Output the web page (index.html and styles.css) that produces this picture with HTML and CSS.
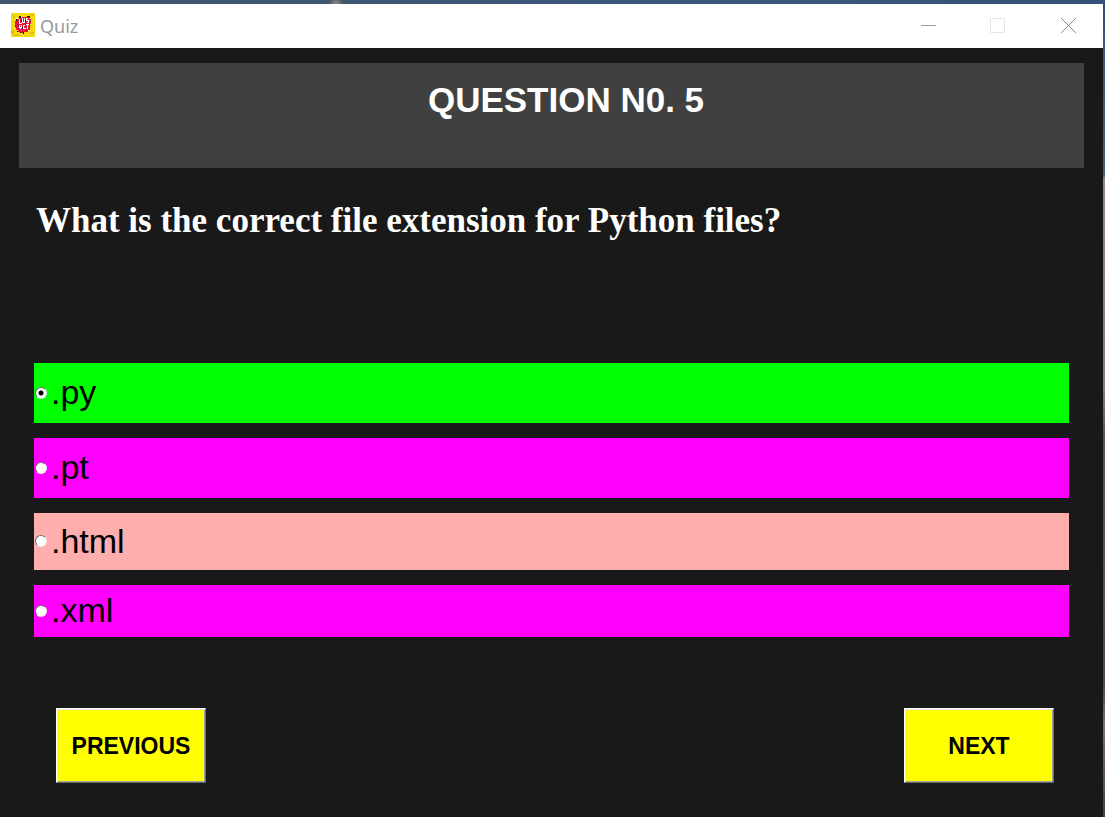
FILE: index.html
```html
<!DOCTYPE html>
<html lang="en">
<head>
<meta charset="utf-8">
<title>Quiz</title>
<link rel="stylesheet" href="styles.css">
</head>
<body>
<div class="window">
  <header class="titlebar">
    <svg class="app-icon" viewBox="0 0 24 24" aria-hidden="true" shape-rendering="crispEdges">
      <path fill="#f5d90f" d="M0 0h24v24H0z"/>
      <path fill="#e8bc12" d="M0 17h3v4H0zM20 1h3v2h-3zM2 2h2v3H2zM19 19h4v2h-4zM3 21h5v2H3z"/>
      <path fill="#fff7c0" d="M5 5h2v2H5zM17 16h2v2h-2zM7 18h2v1H7z"/>
      <path fill="#111" d="M8 3h2v2H8zM16 3h3v2h-3zM5 6h1v2H5zM19 6h1v3h-1zM4 12h2v2H4zM18 14h1v2h-1zM6 18h1v1H6zM9 19h2v1H9zM12 19h1v2h-1z"/>
      <path fill="#e3173e" d="M6 6h2V5h3V4h7v2h2v5h-1v6h-2v2h-5v1h-2v-1H7v-2H5v-4H4V8h2z"/>
      <path fill="#fff" d="M8 6h1v4h2v1H8zM11 5h1v4h1V5h1v5h-3zM15 5h2v1h-1v1h2v3h-2V9h1V8h-2zM8 12h1v2h1v-2h1v3h-1v1H9v-1H8zM12 12h2v1h-1v2h2v1h-3zM15 11h3v1h-1v4h-1v-4h-1z"/>
      <path fill="#111" d="M10 7h1v2h-1zM14 7h1v2h-1zM11 14h1v2h-1zM7 12h1v1H7z"/>
    </svg>
    <span class="caption">Quiz</span>
    <div class="controls">
      <button class="control" type="button" aria-label="Minimize"><svg viewBox="0 0 16 16" aria-hidden="true"><path d="M1 7.5h15" stroke="#999"/></svg></button>
      <button class="control" type="button" aria-label="Maximize" disabled><svg viewBox="0 0 16 16" aria-hidden="true"><path d="M.5.5h14v14H.5z" stroke="#e6e6e6"/></svg></button>
      <button class="control" type="button" aria-label="Close"><svg viewBox="0 0 16 16" aria-hidden="true"><path d="M1 0l15 15M16 0L1 15" stroke="#888"/></svg></button>
    </div>
  </header>
  <main class="quiz">
    <h1 class="heading">QUESTION N0. 5</h1>
    <form class="form">
      <fieldset class="question">
        <legend class="prompt">What is the correct file extension for Python files?</legend>
        <div class="options">
          <label class="option correct"><input class="radio" type="radio" name="answer" checked><span>.py</span></label>
          <label class="option"><input class="radio" type="radio" name="answer"><span>.pt</span></label>
          <label class="option medium active"><input class="radio" type="radio" name="answer"><span>.html</span></label>
          <label class="option short"><input class="radio" type="radio" name="answer"><span>.xml</span></label>
        </div>
      </fieldset>
      <div class="actions">
        <button class="nav" type="button">PREVIOUS</button>
        <button class="nav" type="button">NEXT</button>
      </div>
    </form>
  </main>
</div>
</body>
</html>
```
FILE: styles.css
```css
* { box-sizing: border-box; }

body {
  margin: 0;
  min-height: 100vh;
  padding: 4px 2px 0 0;
  display: flex;
  background:
    radial-gradient(circle at 336px 4px, #8d8a8c 0, #4d5663 7px, transparent 10px) 0 0 / 100% 4px no-repeat,
    linear-gradient(90deg, #42566f, #3b587c 60%, #345179) 0 0 / 100% 4px no-repeat,
    linear-gradient(#345179 0, #4a607d 176px, #93847f 178px, #8a7a74 390px, #604f49 440px, #5a4a48 690px, #806e6a 725px, #4b4040 817px);
  font-family: "Liberation Sans", Arial, sans-serif;
}

.window {
  flex: 1;
  display: flex;
  flex-direction: column;
  background: #191919;
  border-bottom: 1px solid #0c0c0c;
}

.titlebar {
  display: flex;
  align-items: center;
  height: 44px;
  padding: 0 0 2px 11px;
  gap: 5px;
  background: #fff;
}

.app-icon { width: 24px; height: 24px; }

.caption {
  padding-top: 2px;
  color: #999;
  font: 18px/24px "Noto Sans", "Open Sans", sans-serif;
}

.controls { display: flex; margin-left: auto; }

.control {
  width: 70px;
  height: 42px;
  padding: 2px 0 0;
  border: 0;
  background: none;
  display: grid;
  place-items: center;
}

.control svg { width: 16px; height: 16px; fill: none; }

.quiz { padding: 15px 19px 34px; }

.heading {
  margin: 0;
  height: 105px;
  padding: 17px 0 0 29px;
  background: #404040;
  color: #fff;
  font-size: 35px;
  line-height: 40px;
  text-align: center;
}

.form { padding: 33px 15px 0; }

.question { margin: 0; padding: 0; border: 0; min-width: 0; }

.prompt {
  padding: 0 2px;
  margin-bottom: 122px;
  color: #fff;
  font: bold 35px/40px "Liberation Serif", "Times New Roman", serif;
}

.options { display: grid; gap: 15px; }

.option {
  display: flex;
  align-items: center;
  gap: 4px;
  height: 60px;
  padding: 0 0 1px 1px;
  background: #f0f;
  color: #000;
  font-size: 34px;
  line-height: 41px;
}

.option.correct { background: #0f0; }
.option.active { background: #ffaeae; }
.option.medium { height: 57px; }
.option.short { height: 52px; }

.radio {
  appearance: none;
  flex: none;
  width: 12px;
  height: 12px;
  margin: 0;
  border: 1px solid;
  border-color: #707070 #e8e8e8 #e8e8e8 #707070;
  border-radius: 50%;
  background: #fff;
}

.radio:checked { background: radial-gradient(circle, #000 2px, #fff 3px); }

.actions {
  display: flex;
  justify-content: space-between;
  padding: 71px 15px 0 22px;
}

.nav {
  width: 150px;
  height: 75px;
  padding: 0;
  border: 1px solid;
  border-color: #fff #696969 #696969 #fff;
  background: #ff0;
  box-shadow: inset 1px 1px #e3e3e3, inset -1px -1px #a0a0a0;
  color: #000;
  font: bold 23px/28px "Liberation Sans", Arial, sans-serif;
}
```
